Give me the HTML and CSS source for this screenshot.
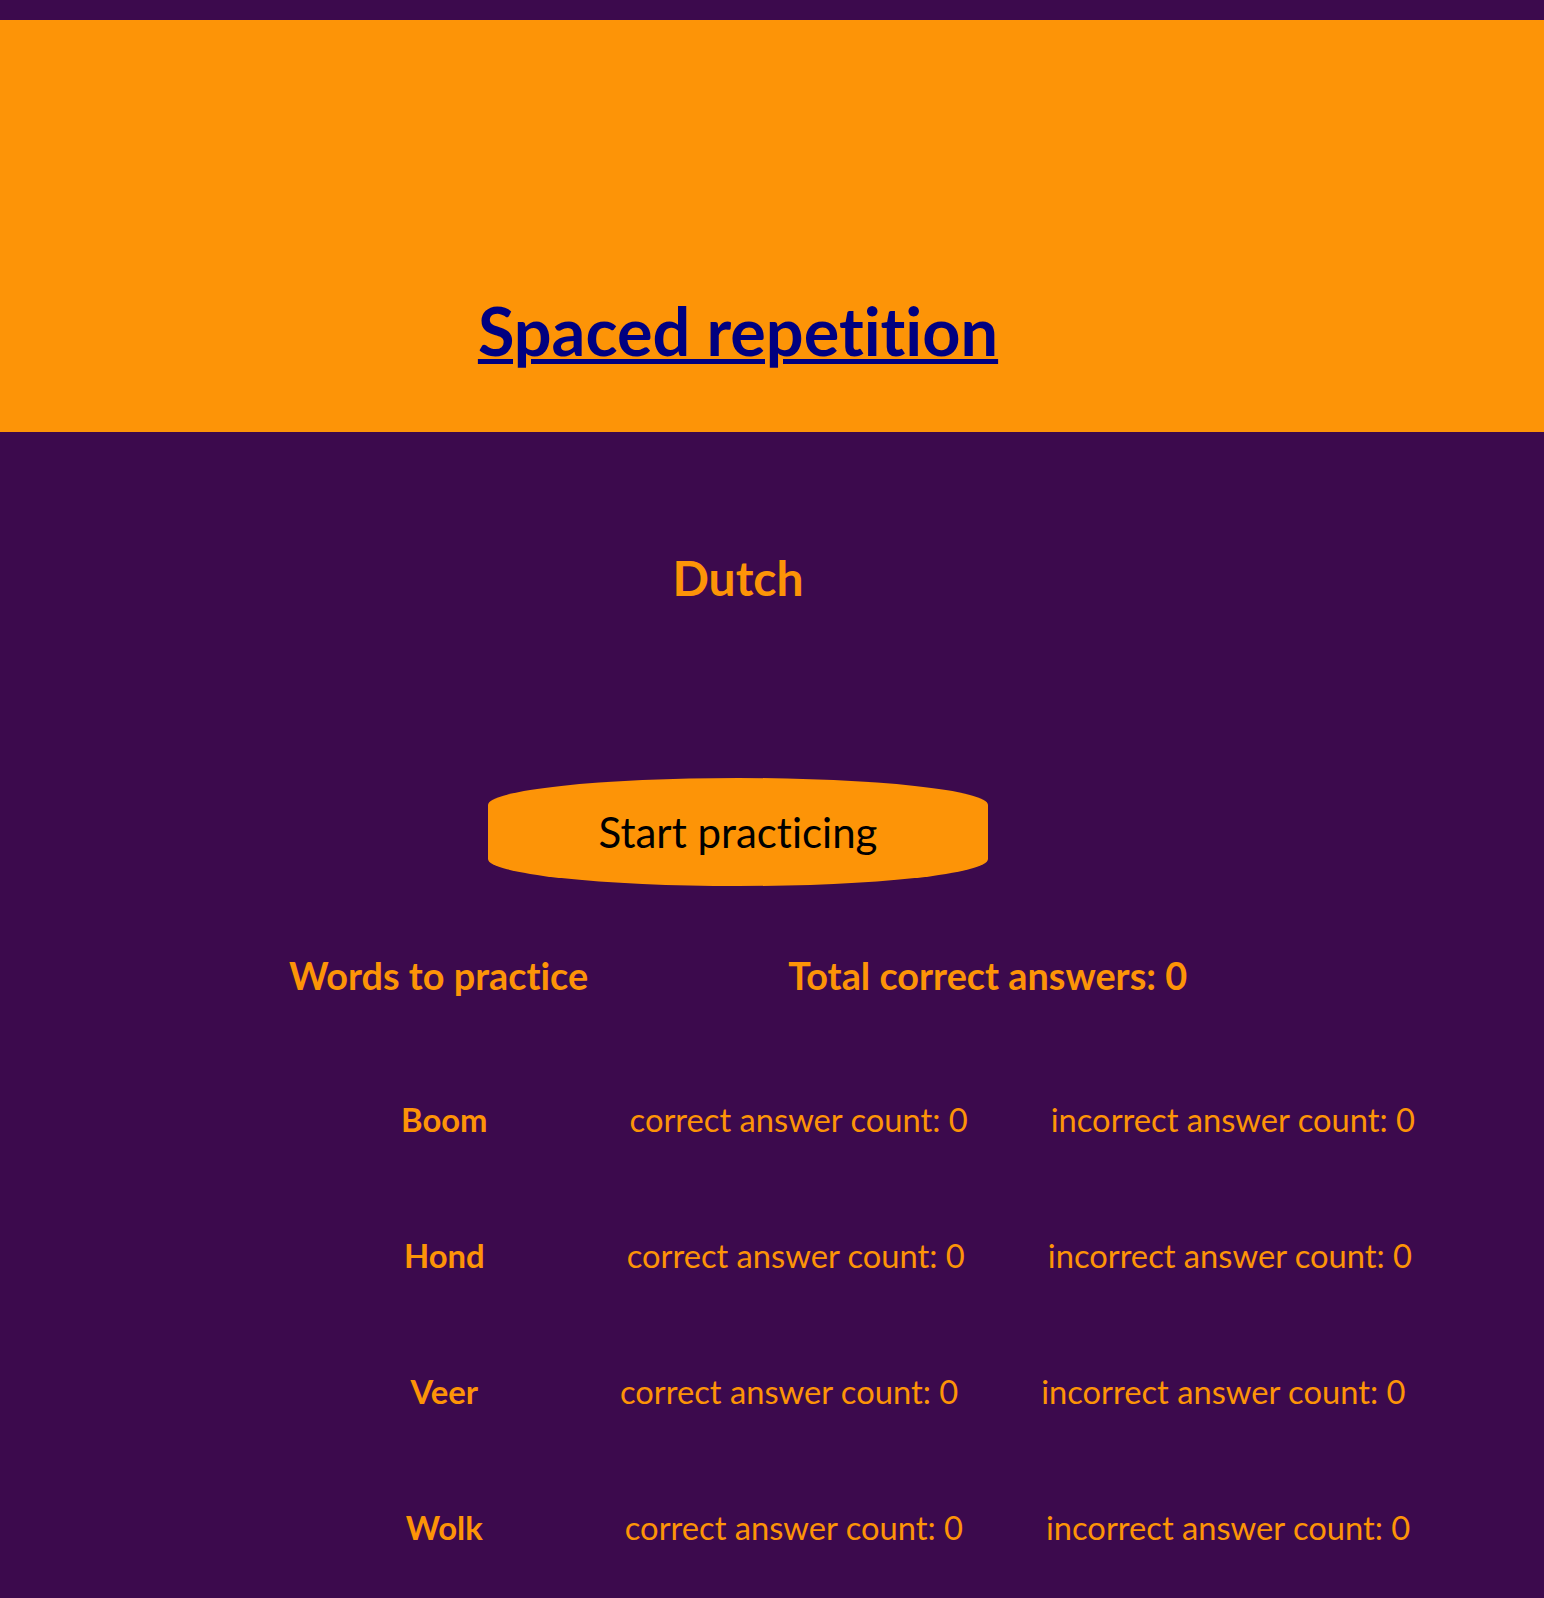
FILE: index.html
```html
<!DOCTYPE html>
<html lang="en">
<head>
<meta charset="utf-8">
<title>Spaced repetition</title>
<link rel="stylesheet" href="styles.css">
</head>
<body>
<header class="header">
  <h1 class="title"><a class="title-link" href="#">Spaced repetition</a></h1>
</header>
<main class="main">
  <h2 class="language">Dutch</h2>
  <div class="actions">
    <button class="start-btn" type="button">Start practicing</button>
  </div>
  <div class="summary">
    <h3 class="summary-item">Words to practice</h3>
    <h3 class="summary-item">Total correct answers: 0</h3>
  </div>
  <ul class="words">
    <li class="word-row"><span class="word">Boom</span><span class="count count-correct">correct answer count: 0</span><span class="count">incorrect answer count: 0</span></li>
    <li class="word-row"><span class="word">Hond</span><span class="count count-correct">correct answer count: 0</span><span class="count">incorrect answer count: 0</span></li>
    <li class="word-row"><span class="word">Veer</span><span class="count count-correct">correct answer count: 0</span><span class="count">incorrect answer count: 0</span></li>
    <li class="word-row"><span class="word">Wolk</span><span class="count count-correct">correct answer count: 0</span><span class="count">incorrect answer count: 0</span></li>
  </ul>
</main>
</body>
</html>
```
FILE: styles.css
```css
html, body {
  margin: 0;
  padding: 0;
}

body {
  background: #3c0a4d;
  color: #fd9407;
  font-family: Lato, "Open Sans", sans-serif;
  font-variant-ligatures: none;
  padding-top: 20px;
}

.header {
  background: #fd9407;
  height: 412px;
  box-sizing: border-box;
  padding: 270px 68px 0 0;
  text-align: center;
}

.title {
  margin: 0;
  font-size: 66.6px;
  line-height: 80px;
  font-weight: 700;
}

.title-link {
  color: #000080;
  text-decoration: underline;
  text-decoration-thickness: 5px;
  text-underline-offset: 3px;
}

.main {
  padding-right: 68px;
}

.language {
  margin: 116px 0 0;
  text-align: center;
  font-size: 48px;
  line-height: 60px;
  font-weight: 700;
}

.actions {
  display: flex;
  justify-content: center;
  margin-top: 170px;
}

.start-btn {
  width: 500px;
  height: 108px;
  border: none;
  background: #fd9407;
  color: #000;
  border-radius: 50% / 25%;
  font-family: Lato, "Open Sans", sans-serif;
  font-variant-ligatures: none;
  font-size: 42px;
  padding: 0;
}

.summary {
  display: flex;
  justify-content: center;
  gap: 200px;
  margin-top: 66px;
}

.summary-item {
  margin: 0;
  font-size: 37.8px;
  line-height: 48px;
  font-weight: 700;
}

.words {
  list-style: none;
  margin: 52px 0 0;
  padding: 0 0 0 340px;
}

.word-row {
  display: flex;
  justify-content: center;
  height: 136px;
  line-height: 136px;
}

.word {
  font-weight: 700;
  font-size: 32.8px;
  margin-right: 142px;
}

.count {
  font-size: 32.7px;
}

.count-correct {
  margin-right: 83px;
}
```
